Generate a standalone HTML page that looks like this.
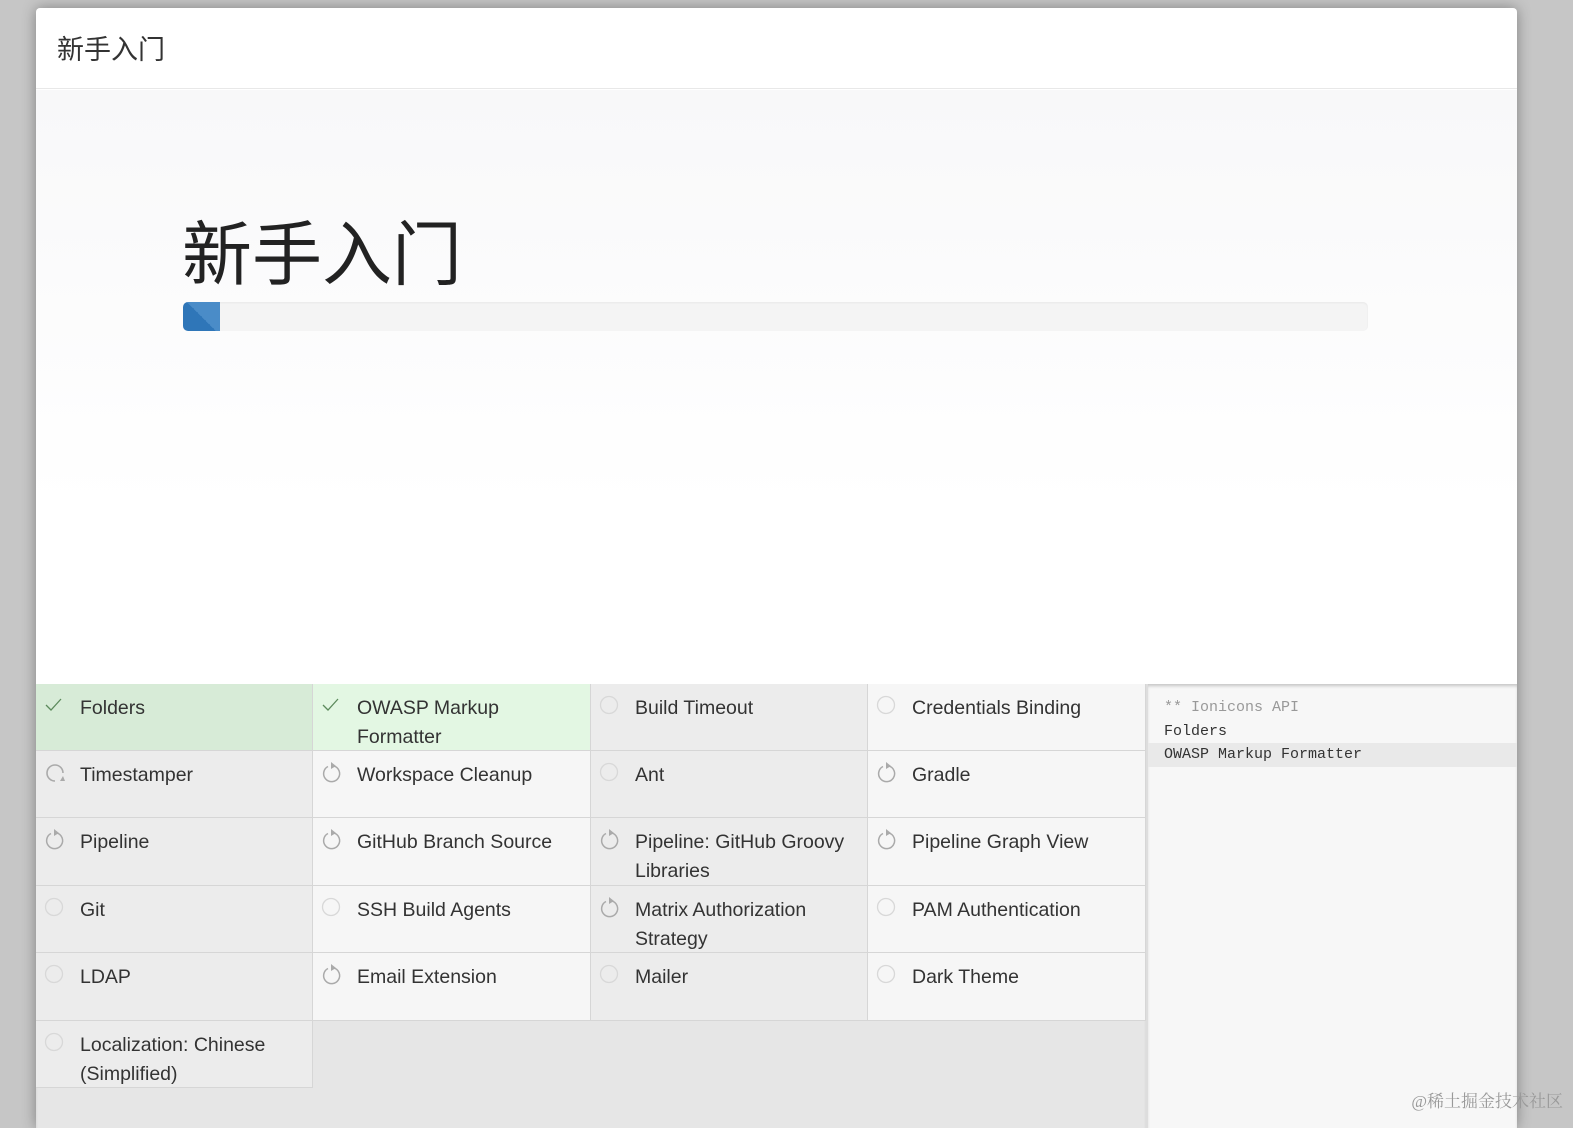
<!DOCTYPE html>
<html><head><meta charset="utf-8">
<style>
*{margin:0;padding:0;box-sizing:border-box}
body{width:1573px;height:1118px;overflow:hidden;background:#c6c6c6;font-family:"Liberation Sans","Noto Sans CJK SC",sans-serif;position:relative}
.modal{position:absolute;left:36px;top:8px;width:1481px;height:1120px;background:#fff;border-radius:4px 4px 0 0;box-shadow:0 0 14px rgba(0,0,0,.35);overflow:hidden}
.hdr{height:81px;border-bottom:1px solid #e8e8e8;font-size:27px;color:#333;padding:27px 0 0 21px;line-height:30px}
.body{position:absolute;top:82px;left:0;right:0;height:594px;background:linear-gradient(#f8f8f9,#fff 70%)}
.h1{position:absolute;left:146px;top:120px;font-size:70px;color:#222;line-height:90px;font-weight:400}
.bar{position:absolute;left:147px;top:212px;width:1185px;height:29px;background:#f4f4f4;border-radius:5px;box-shadow:inset 0 1px 2px rgba(0,0,0,.05)}
.fill{width:37px;height:29px;border-radius:5px 0 0 5px;background:linear-gradient(45deg,#2f76b8 50%,#4a8cc8 50%)}
.grid{position:absolute;top:676px;left:0;width:1110px;height:444px;background:#e6e6e6;box-shadow:inset 0 3px 3px -1px rgba(0,0,0,.2)}
.cell{position:absolute;width:277px;border-right:1px solid #d6d6d6;border-bottom:1px solid #d6d6d6;font-size:19.5px;color:#333;line-height:29px;padding:10px 4px 0 44px}
.d{background:#ececec}.l{background:#f6f6f6}
.g1{background:#d7ebd7}.g2{background:#e3f7e3}
.cell svg{position:absolute;left:8px;top:11px}
.log{position:absolute;left:1110px;top:676px;width:371px;height:444px;background:#f7f7f7;border-left:2px solid #ddd;box-shadow:inset 0 3px 3px -1px rgba(0,0,0,.2);font-family:"Liberation Mono","Noto Sans CJK SC",monospace;font-size:15px;color:#333;padding-top:12px}
.log div{height:23.5px;line-height:23.5px;padding-left:16px}
.wm{position:absolute;right:10px;bottom:6px;font-family:"Liberation Serif","Noto Serif CJK SC",serif;font-size:17px;color:#999}
</style></head><body>
<div class="modal">
<div class="hdr">新手入门</div>
<div class="body">
<div class="h1">新手入门</div>
<div class="bar"><div class="fill"></div></div>
</div>
<div class="grid">
<div class="cell g1" style="left:0;top:0;height:67px"><svg width="20" height="20" viewBox="0 0 20 20"><path d="M2 10l5 5 10-11" fill="none" stroke="#5c8a5c" stroke-width="1.3"/></svg>Folders</div>
<div class="cell g2" style="left:277px;top:0;height:67px;width:278px"><svg width="20" height="20" viewBox="0 0 20 20"><path d="M2 10l5 5 10-11" fill="none" stroke="#5c8a5c" stroke-width="1.3"/></svg>OWASP Markup Formatter</div>
<div class="cell d" style="left:555px;top:0;height:67px"><svg width="20" height="20"><circle cx="10" cy="10" r="8.5" fill="none" stroke="#d8d8d8" stroke-width="1.3"/></svg>Build Timeout</div>
<div class="cell l" style="left:832px;top:0;height:67px;width:278px"><svg width="20" height="20"><circle cx="10" cy="10" r="8.5" fill="none" stroke="#d8d8d8" stroke-width="1.3"/></svg>Credentials Binding</div>
<div class="cell d" style="left:0;top:67px;height:67px"><svg width="22" height="22" viewBox="0 0 22 22"><path d="M11 19a8 8 0 1 1 8-8" fill="none" stroke="#aaa" stroke-width="1.6"/><path d="M19 14l-3 5 5 0z" fill="#aaa"/></svg>Timestamper</div>
<div class="cell l" style="left:277px;top:67px;height:67px;width:278px"><svg width="22" height="22" viewBox="0 0 22 22"><path d="M13 4a8 8 0 1 1-6 0.5" fill="none" stroke="#aaa" stroke-width="1.5"/><path d="M10 0l5 4-5 3z" fill="#aaa"/></svg>Workspace Cleanup</div>
<div class="cell d" style="left:555px;top:67px;height:67px"><svg width="20" height="20"><circle cx="10" cy="10" r="8.5" fill="none" stroke="#d8d8d8" stroke-width="1.3"/></svg>Ant</div>
<div class="cell l" style="left:832px;top:67px;height:67px;width:278px"><svg width="22" height="22" viewBox="0 0 22 22"><path d="M13 4a8 8 0 1 1-6 0.5" fill="none" stroke="#aaa" stroke-width="1.5"/><path d="M10 0l5 4-5 3z" fill="#aaa"/></svg>Gradle</div>
<div class="cell d" style="left:0;top:134px;height:68px"><svg width="22" height="22" viewBox="0 0 22 22"><path d="M13 4a8 8 0 1 1-6 0.5" fill="none" stroke="#aaa" stroke-width="1.5"/><path d="M10 0l5 4-5 3z" fill="#aaa"/></svg>Pipeline</div>
<div class="cell l" style="left:277px;top:134px;height:68px;width:278px"><svg width="22" height="22" viewBox="0 0 22 22"><path d="M13 4a8 8 0 1 1-6 0.5" fill="none" stroke="#aaa" stroke-width="1.5"/><path d="M10 0l5 4-5 3z" fill="#aaa"/></svg>GitHub Branch Source</div>
<div class="cell d" style="left:555px;top:134px;height:68px"><svg width="22" height="22" viewBox="0 0 22 22"><path d="M13 4a8 8 0 1 1-6 0.5" fill="none" stroke="#aaa" stroke-width="1.5"/><path d="M10 0l5 4-5 3z" fill="#aaa"/></svg>Pipeline: GitHub Groovy Libraries</div>
<div class="cell l" style="left:832px;top:134px;height:68px;width:278px"><svg width="22" height="22" viewBox="0 0 22 22"><path d="M13 4a8 8 0 1 1-6 0.5" fill="none" stroke="#aaa" stroke-width="1.5"/><path d="M10 0l5 4-5 3z" fill="#aaa"/></svg>Pipeline Graph View</div>
<div class="cell d" style="left:0;top:202px;height:67px"><svg width="20" height="20"><circle cx="10" cy="10" r="8.5" fill="none" stroke="#d8d8d8" stroke-width="1.3"/></svg>Git</div>
<div class="cell l" style="left:277px;top:202px;height:67px;width:278px"><svg width="20" height="20"><circle cx="10" cy="10" r="8.5" fill="none" stroke="#d8d8d8" stroke-width="1.3"/></svg>SSH Build Agents</div>
<div class="cell d" style="left:555px;top:202px;height:67px"><svg width="22" height="22" viewBox="0 0 22 22"><path d="M13 4a8 8 0 1 1-6 0.5" fill="none" stroke="#aaa" stroke-width="1.5"/><path d="M10 0l5 4-5 3z" fill="#aaa"/></svg>Matrix Authorization Strategy</div>
<div class="cell l" style="left:832px;top:202px;height:67px;width:278px"><svg width="20" height="20"><circle cx="10" cy="10" r="8.5" fill="none" stroke="#d8d8d8" stroke-width="1.3"/></svg>PAM Authentication</div>
<div class="cell d" style="left:0;top:269px;height:68px"><svg width="20" height="20"><circle cx="10" cy="10" r="8.5" fill="none" stroke="#d8d8d8" stroke-width="1.3"/></svg>LDAP</div>
<div class="cell l" style="left:277px;top:269px;height:68px;width:278px"><svg width="22" height="22" viewBox="0 0 22 22"><path d="M13 4a8 8 0 1 1-6 0.5" fill="none" stroke="#aaa" stroke-width="1.5"/><path d="M10 0l5 4-5 3z" fill="#aaa"/></svg>Email Extension</div>
<div class="cell d" style="left:555px;top:269px;height:68px"><svg width="20" height="20"><circle cx="10" cy="10" r="8.5" fill="none" stroke="#d8d8d8" stroke-width="1.3"/></svg>Mailer</div>
<div class="cell l" style="left:832px;top:269px;height:68px;width:278px"><svg width="20" height="20"><circle cx="10" cy="10" r="8.5" fill="none" stroke="#d8d8d8" stroke-width="1.3"/></svg>Dark Theme</div>
<div class="cell d" style="left:0;top:337px;height:67px"><svg width="20" height="20"><circle cx="10" cy="10" r="8.5" fill="none" stroke="#d8d8d8" stroke-width="1.3"/></svg>Localization: Chinese (Simplified)</div>
</div>
<div class="log">
<div style="color:#999">** Ionicons API</div>
<div>Folders</div>
<div style="background:#e9e9e9">OWASP Markup Formatter</div>
</div>
</div>
<div class="wm">@稀土掘金技术社区</div>
</body></html>
